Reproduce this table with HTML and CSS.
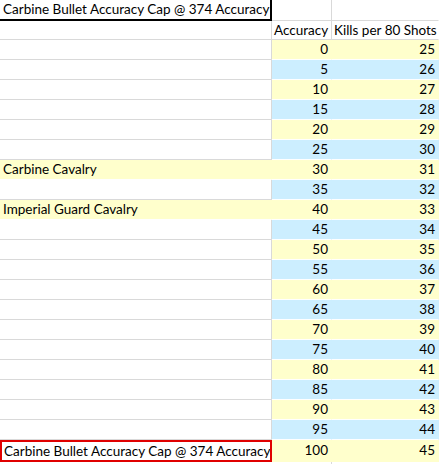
FILE: index.html
```html
<!DOCTYPE html>
<html>
<head>
<meta charset="utf-8">
<link rel="stylesheet" href="styles.css">
</head>
<body>
<div class="sheet">
  <div class="cell top title">Carbine Bullet Accuracy Cap @ 374 Accuracy</div>
  <div class="cell top gb"></div>
  <div class="cell top gc"></div>

  <div class="cell head ga"></div>
  <div class="cell head gb">Accuracy</div>
  <div class="cell head gc">Kills per 80 Shots</div>

  <div class="cell ga"></div><div class="cell num y">0</div><div class="cell num y">25</div>
  <div class="cell ga"></div><div class="cell num b">5</div><div class="cell num b">26</div>
  <div class="cell ga"></div><div class="cell num y">10</div><div class="cell num y">27</div>
  <div class="cell ga"></div><div class="cell num b">15</div><div class="cell num b">28</div>
  <div class="cell ga"></div><div class="cell num y">20</div><div class="cell num y">29</div>
  <div class="cell ga"></div><div class="cell num b">25</div><div class="cell num b">30</div>
  <div class="cell label y">Carbine Cavalry</div><div class="cell num y">30</div><div class="cell num y">31</div>
  <div class="cell ga"></div><div class="cell num b">35</div><div class="cell num b">32</div>
  <div class="cell label y">Imperial Guard Cavalry</div><div class="cell num y">40</div><div class="cell num y">33</div>
  <div class="cell ga"></div><div class="cell num b">45</div><div class="cell num b">34</div>
  <div class="cell ga"></div><div class="cell num y">50</div><div class="cell num y">35</div>
  <div class="cell ga"></div><div class="cell num b">55</div><div class="cell num b">36</div>
  <div class="cell ga"></div><div class="cell num y">60</div><div class="cell num y">37</div>
  <div class="cell ga"></div><div class="cell num b">65</div><div class="cell num b">38</div>
  <div class="cell ga"></div><div class="cell num y">70</div><div class="cell num y">39</div>
  <div class="cell ga"></div><div class="cell num b">75</div><div class="cell num b">40</div>
  <div class="cell ga"></div><div class="cell num y">80</div><div class="cell num y">41</div>
  <div class="cell ga"></div><div class="cell num b">85</div><div class="cell num b">42</div>
  <div class="cell ga"></div><div class="cell num y">90</div><div class="cell num y">43</div>
  <div class="cell ga"></div><div class="cell num b">95</div><div class="cell num b">44</div>
  <div class="cell last boxed">Carbine Bullet Accuracy Cap @ 374 Accuracy</div><div class="cell last num y">100</div><div class="cell last num y">45</div>

  <div class="tail"></div><div class="tail tb"></div><div class="tail"></div>
</div>
</body>
</html>
```

FILE: styles.css
```css
html, body {
  margin: 0;
  padding: 0;
  background: #ffffff;
}

.sheet {
  display: grid;
  grid-template-columns: 272px 60px 107px;
  font-family: Lato, "Open Sans", sans-serif;
  font-size: 13.5px;
  color: #000;
  overflow: hidden;
  width: 439px;
}

.cell {
  box-sizing: border-box;
  height: 20px;
  line-height: 19px;
  padding: 0 3px;
  white-space: nowrap;
  overflow: hidden;
  border-right: 1px solid #d9d9d9;
  border-bottom: 1px solid #d9d9d9;
}

.top {
  height: 21px;
  line-height: 20px;
}

.head {
  height: 19px;
  line-height: 18px;
}

.title {
  border-right: 2px solid #000;
  border-bottom: 2px solid #000;
  line-height: 19px;
  overflow: visible;
}

.gc {
  border-right-color: transparent;
}

.head.gb, .head.gc {
  padding: 0 2px;
}

.num {
  text-align: right;
  padding-right: 3px;
  border-right-color: transparent;
  border-bottom-color: #ffffff;
}

.y {
  background: #ffffcc;
}

.b {
  background: #cceeff;
}

.label {
  border-right-color: transparent;
  border-bottom-color: #ffffff;
}

.last {
  height: 22px;
  line-height: 20px;
  border-bottom: none;
}

.boxed {
  border: 2px solid #e00000;
  padding: 0 2px;
  line-height: 18px;
}

.tail {
  height: 2px;
}

.tb {
  border-right: 1px solid #d9d9d9;
  box-sizing: border-box;
}
```
